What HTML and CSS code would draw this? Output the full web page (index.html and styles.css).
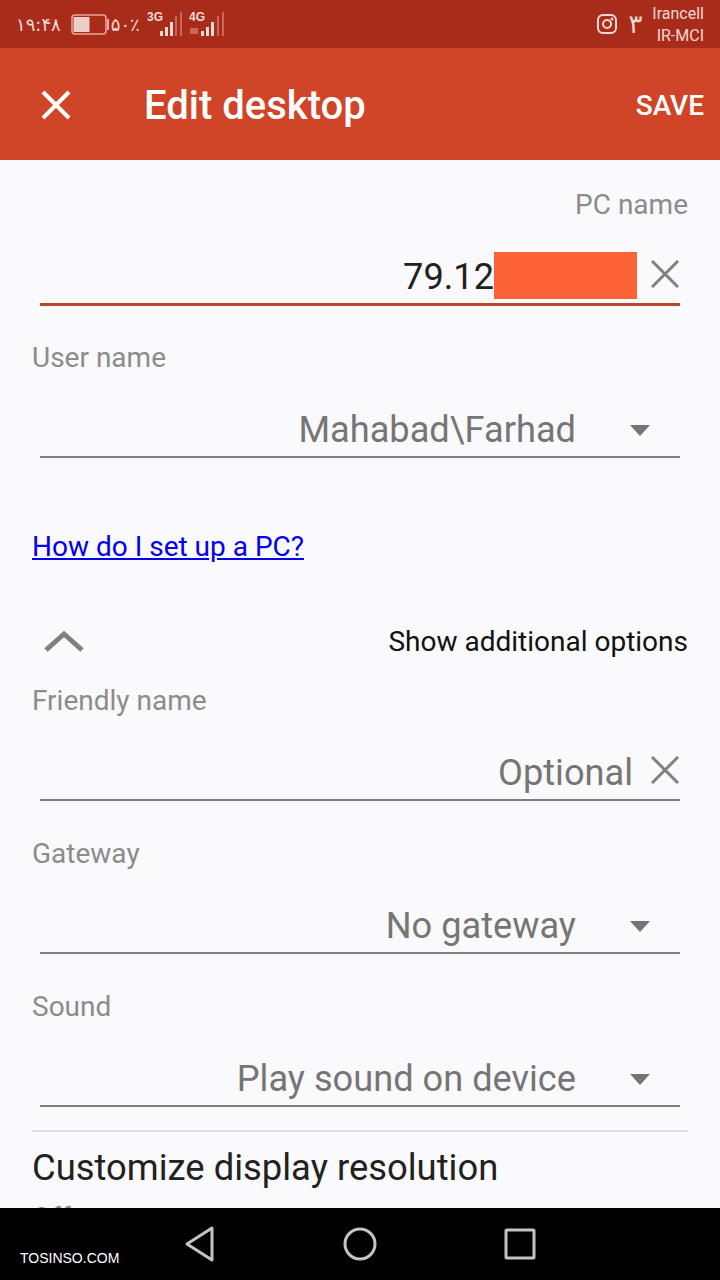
FILE: index.html
```html
<!DOCTYPE html>
<html lang="en">
<head>
    <meta charset="UTF-8">
    <title>Edit desktop</title>
    <link rel="stylesheet" href="styles.css">
</head>
<body>
<div class="status-bar">
    <div class="status-group">
        <span class="clock">۱۹:۴۸</span>
        <svg class="battery" width="38" height="21" viewBox="0 0 38 21">
            <rect x="1" y="1" width="34" height="19" rx="3" fill="none" stroke="#e9a69a" stroke-width="1.5"/>
            <rect x="2.5" y="3" width="16" height="15" fill="#efcdc8"/>
            <rect x="36" y="5" width="2" height="11" fill="#e9a69a"/>
        </svg>
        <span class="percent">۵۰٪</span>
        <svg class="signal first" width="36" height="26" viewBox="0 0 36 26">
            <text x="0" y="10" class="net">3G</text>
            <rect x="13" y="20" width="3" height="5" fill="#f2d9d4"/>
            <rect x="18" y="16" width="3" height="9" fill="#f2d9d4"/>
            <rect x="23" y="11" width="3" height="14" fill="#f2d9d4"/>
            <rect x="28" y="5" width="2" height="20" fill="#c9685a"/>
            <rect x="33" y="1" width="2" height="24" fill="#c9685a"/>
        </svg>
        <svg class="signal" width="36" height="26" viewBox="0 0 36 26">
            <text x="0" y="10" class="net">4G</text>
            <rect x="1" y="17" width="8" height="6" fill="#c9685a"/>
            <rect x="12" y="20" width="3" height="5" fill="#f2d9d4"/>
            <rect x="17" y="16" width="3" height="9" fill="#f2d9d4"/>
            <rect x="22" y="11" width="3" height="14" fill="#f2d9d4"/>
            <rect x="28" y="5" width="2" height="20" fill="#c9685a"/>
            <rect x="33" y="1" width="2" height="24" fill="#c9685a"/>
        </svg>
    </div>
    <div class="status-group">
        <svg width="20" height="20" viewBox="0 0 20 20" fill="none" stroke="#f4d8d2" stroke-width="2">
            <rect x="1" y="1" width="18" height="18" rx="5"/>
            <circle cx="10" cy="10" r="4"/>
            <circle cx="15" cy="5" r="0.6"/>
        </svg>
        <span class="notify-count">۳</span>
        <div class="carriers">
            <span>Irancell</span>
            <span>IR-MCI</span>
        </div>
    </div>
</div>

<div class="app-bar">
    <svg class="close" width="30" height="30" viewBox="0 0 30 30" stroke="#fff" stroke-width="4">
        <path d="M2 2 L28 28 M28 2 L2 28"/>
    </svg>
    <div class="app-title">Edit desktop</div>
    <div class="save">SAVE</div>
</div>

<div class="form">
    <div class="label right">PC name</div>
    <div class="input active">
        <span class="value dark">79.12</span>
        <span class="redact"></span>
        <svg class="clear" width="28" height="28" viewBox="0 0 28 28" stroke="#808080" stroke-width="3">
            <path d="M1 1 L27 27 M27 1 L1 27"/>
        </svg>
    </div>

    <div class="label gap">User name</div>
    <div class="input">
        <span class="value">Mahabad\Farhad</span>
        <span class="caret"></span>
    </div>

    <div class="link-row"><a href="#">How do I set up a PC?</a></div>

    <div class="options-row">
        <svg width="40" height="22" viewBox="0 0 40 22" fill="none" stroke="#808080" stroke-width="5">
            <path d="M2 20 L20 4 L38 20"/>
        </svg>
        <span>Show additional options</span>
    </div>

    <div class="label friendly">Friendly name</div>
    <div class="input">
        <span class="value optional">Optional</span>
        <svg class="clear" width="28" height="28" viewBox="0 0 28 28" stroke="#808080" stroke-width="3">
            <path d="M1 1 L27 27 M27 1 L1 27"/>
        </svg>
    </div>

    <div class="label gap wide">Gateway</div>
    <div class="input">
        <span class="value">No gateway</span>
        <span class="caret"></span>
    </div>

    <div class="label gap wide">Sound</div>
    <div class="input">
        <span class="value">Play sound on device</span>
        <span class="caret"></span>
    </div>

    <div class="divider"></div>
    <div class="section-title">Customize display resolution</div>
    <div class="section-sub">Off</div>
</div>

<div class="nav-bar">
    <span class="watermark">TOSINSO.COM</span>
    <svg width="32" height="36" viewBox="0 0 32 36" fill="none" stroke="#c4c4c4" stroke-width="3" stroke-linejoin="round">
        <path d="M28 2 L3 18 L28 34 Z"/>
    </svg>
    <svg width="34" height="34" viewBox="0 0 34 34" fill="none" stroke="#c4c4c4" stroke-width="3">
        <circle cx="17" cy="17" r="15"/>
    </svg>
    <svg width="32" height="32" viewBox="0 0 32 32" fill="none" stroke="#c4c4c4" stroke-width="3" stroke-linejoin="round">
        <rect x="2" y="2" width="28" height="28" rx="1"/>
    </svg>
</div>
</body>
</html>
```

FILE: styles.css
```css
* {
    margin: 0;
    padding: 0;
    box-sizing: border-box;
}

body {
    width: 720px;
    height: 1280px;
    overflow: hidden;
    display: flex;
    flex-direction: column;
    font-family: Roboto, "Liberation Sans", sans-serif;
    background-color: #faf9fc;
}

.status-bar {
    height: 48px;
    flex: none;
    padding: 0 16px;
    background-color: #a92c1a;
    color: #f2d9d4;
    display: flex;
    justify-content: space-between;
    align-items: center;
}

.status-group {
    display: flex;
    align-items: center;
    gap: 8px;
}

.clock,
.percent,
.notify-count {
    font-family: "DejaVu Sans", sans-serif;
    font-size: 18px;
}

.battery {
    margin-left: 2px;
}

.percent {
    margin-left: -6px;
}

.signal {
    margin-left: -2px;
}

.signal.first {
    margin-left: -1px;
}

.notify-count {
    font-size: 26px;
    margin-left: 3px;
}

.net {
    font-family: "Liberation Sans", sans-serif;
    font-size: 12px;
    font-weight: 700;
    fill: #f2d9d4;
}

.carriers {
    display: flex;
    flex-direction: column;
    align-items: flex-end;
    padding-top: 2px;
    font-size: 16px;
    line-height: 22px;
    margin-left: 2px;
}

.app-bar {
    height: 112px;
    flex: none;
    padding: 2px 16px 0 41px;
    background-color: #d04527;
    color: #fff;
    display: flex;
    align-items: center;
}

.app-title {
    flex: 1;
    margin-left: 73px;
    font-size: 40px;
    font-weight: 500;
}

.save {
    font-size: 28px;
    font-weight: 500;
}

.form {
    flex: 1;
    min-height: 0;
    overflow: hidden;
    padding: 24px 32px 0;
}

.label {
    height: 40px;
    line-height: 42px;
    font-size: 28px;
    color: #8c8c8c;
}

.right {
    text-align: right;
}

.gap {
    margin-top: 31px;
}

.gap.wide {
    margin-top: 32px;
}

.friendly {
    margin-top: 19px;
}

.input {
    height: 81px;
    margin: 0 8px;
    padding-top: 27px;
    border-bottom: 2px solid #7d7d7d;
    display: flex;
    justify-content: flex-end;
    align-items: flex-start;
}

.input.active {
    height: 82px;
    border-bottom: 3px solid #b8492f;
}

.value {
    height: 50px;
    line-height: 52px;
    font-size: 36.2px;
    color: #757575;
}

.value.dark {
    color: #212121;
}

.value.optional {
    margin-right: 18px;
}

.redact {
    width: 143px;
    height: 47px;
    margin-top: 1px;
    margin-right: 14px;
    background-color: #fc6236;
}

.clear {
    margin-top: 9px;
    margin-right: 1px;
}

.caret {
    width: 0;
    height: 0;
    margin: 21px 30px 0 54px;
    border-left: 10px solid transparent;
    border-right: 10px solid transparent;
    border-top: 11px solid #757575;
}

.link-row {
    height: 40px;
    line-height: 42px;
    margin-top: 68px;
    font-size: 28px;
}

.link-row a {
    color: #0000ee;
}

.options-row {
    height: 40px;
    margin-top: 55px;
    padding-left: 12px;
    font-size: 28px;
    color: #111;
    display: flex;
    justify-content: space-between;
    align-items: center;
}

.divider {
    height: 2px;
    margin-top: 23px;
    background-color: #dcdbdf;
}

.section-title {
    height: 64px;
    line-height: 70px;
    margin-top: 1px;
    font-size: 36.4px;
    color: #212121;
}

.section-sub {
    height: 40px;
    line-height: 40px;
    margin-top: 1px;
    font-size: 28px;
    color: #8c8c8c;
}

.nav-bar {
    height: 72px;
    flex: none;
    padding-left: 184px;
    background-color: #000;
    position: relative;
    display: flex;
    align-items: center;
    gap: 127px;
}

.watermark {
    position: absolute;
    left: 20px;
    top: 42px;
    font-family: "Liberation Sans", sans-serif;
    font-size: 14px;
    color: #fff;
}
```
